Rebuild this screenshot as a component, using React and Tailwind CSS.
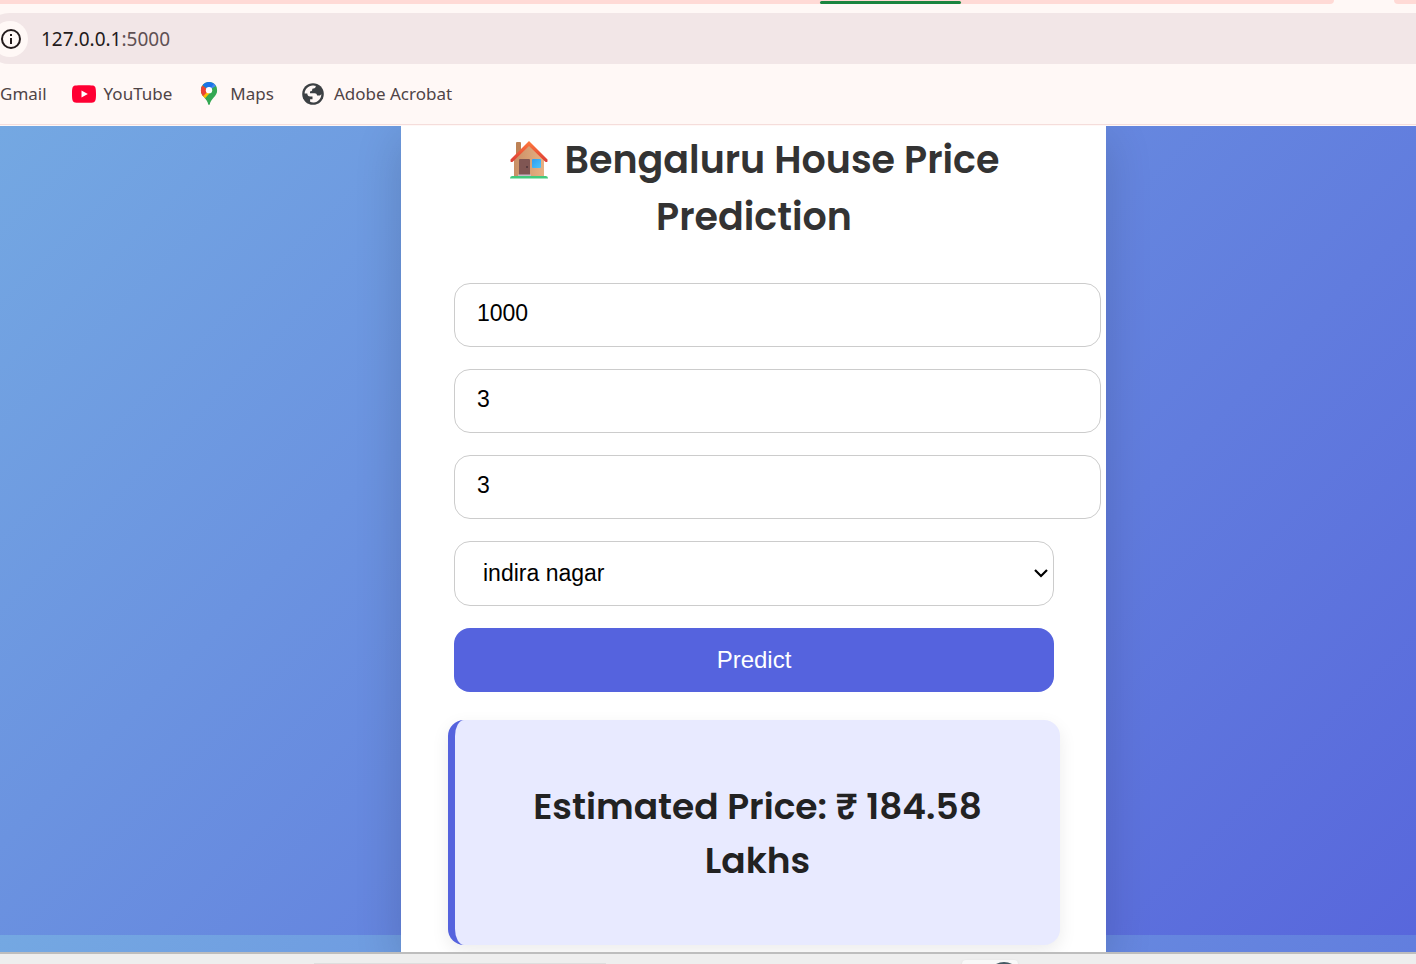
import { useState } from "react";

function InfoIcon() {
  return (
    <svg viewBox="0 0 22 22" className="size-[22px]" aria-hidden="true">
      <circle cx="11" cy="11" r="9" fill="none" stroke="#231a1b" strokeWidth="2" />
      <rect x="10" y="10" width="2" height="6" fill="#231a1b" />
      <rect x="10" y="6" width="2" height="2" fill="#231a1b" />
    </svg>
  );
}

function YouTubeIcon() {
  return (
    <svg viewBox="0 0 24 18" className="h-[18px] w-6" aria-hidden="true">
      <path d="M3 .6C6 .1 18 .1 21 .6 23.400 1 24 3 24 9s-.6 8-3 8.400c-3 .5-15 .5-18 0C.6 17 0 15 0 9S.6 1 3 .6z" fill="#ff0033" />
      <path d="M9.500 5.400v7.200l6.300-3.600z" fill="#fff" />
    </svg>
  );
}

function MapsIcon() {
  return (
    <svg viewBox="0 0 18 26" className="h-[25px] w-[18px]" aria-hidden="true">
      <defs>
        <clipPath id="pin">
          <path d="M9 1a8.500 8.500 0 0 0-8.500 8.500c0 3.300 1.600 5.300 3.600 7.700C6.300 19.800 7.500 21 8.100 24c.3 1.400 1.500 1.400 1.800 0 .6-3 1.800-4.200 4-6.800 2-2.400 3.600-4.400 3.600-7.700A8.500 8.500 0 0 0 9 1z" />
        </clipPath>
      </defs>
      <g clipPath="url(#pin)">
        <rect width="18" height="26" fill="#34a853" />
        <path d="M0 14 9 7l3.500 2.500-8.500 9.500L0 20z" fill="#fbbc04" />
        <path d="M0 3 9 9.500 2.500 16 0 14z" fill="#ea4335" />
        <path d="M2 4 6 0h7l2 2.500-6 7z" fill="#1a73e8" />
        <path d="M12 0l6 0v5l-1.500 0L9 9.500 14.500 2z" fill="#4285f4" />
      </g>
      <circle cx="9" cy="9.500" r="3.300" fill="#fff" />
    </svg>
  );
}

function GlobeIcon() {
  return (
    <svg viewBox="0 0 22 22" className="size-[22px]" aria-hidden="true">
      <circle cx="11" cy="11" r="10.800" fill="#3c4043" />
      <path d="M2.600 10.500c.2-4.300 3.800-7.700 8-7.900 1.500 0 2.500.2 3.200.5-.1 1.500-.9 2.300-2.300 2.300-.9 0-1.300.5-1.300 1.300 0 1.100-.8 1.700-2.200 1.700v1.800h4.600c1.500 0 2.300.8 2.500 2.200h2c.9 0 1.600-.5 2.200-1.500.2 4.400-3.200 8.200-7.400 8.500-1.500.1-2.800-.2-3.800-.7v-2.500h2.400v-2.700H8.300c-2 0-3-1.200-3-3z" fill="#fff8f6" />
    </svg>
  );
}

function HouseIcon() {
  return (
    <svg viewBox="0 0 40 40" className="mr-4 inline-block size-10 align-[-7px]" aria-hidden="true">
      <defs>
        <linearGradient id="wall" x1="0" x2="1">
          <stop offset="0" stopColor="#c88f66" />
          <stop offset="1" stopColor="#e8b183" />
        </linearGradient>
        <linearGradient id="roof" x1="0" x2="0" y1="0" y2="1">
          <stop offset="0" stopColor="#ff7b3d" />
          <stop offset="1" stopColor="#dc3b35" />
        </linearGradient>
        <linearGradient id="pane" x1="0" x2="1" y1="0" y2="1">
          <stop offset="0" stopColor="#2f9df0" />
          <stop offset="1" stopColor="#4cc4fb" />
        </linearGradient>
      </defs>
      <path d="M7 3q0-1 1-1h3q1 0 1 1v16H7z" fill="#bd8255" />
      <path d="M5 18 20 5l15 13v20H5z" fill="url(#wall)" />
      <path d="M20 1 1.500 19.500v2q1 1 2.500 0L20 6l16 15.500q1.500 1 2.500 0v-2z" fill="url(#roof)" />
      <rect x="10" y="19" width="11" height="17" rx="1" fill="#805653" />
      <circle cx="18" cy="27" r="1" fill="#4e3438" />
      <rect x="23" y="19" width="9" height="9" rx="1" fill="url(#pane)" />
      <path d="M9 34.500h13v2H9z" fill="#c9b8c6" />
      <path d="M3 36h34q2 0 2 2.500H1Q1 36 3 36z" fill="#43ca7c" />
    </svg>
  );
}

function BrowserChrome() {
  return (
    <header className="overflow-hidden bg-[#fff8f6] font-['Noto_Sans','Open_Sans',sans-serif]">
      <div className="flex h-1 justify-between">
        <div className="flex w-[1334px] items-end rounded-br-lg bg-[#ffdad6] pl-[820px]">
          <div className="h-[3px] w-[141px] rounded-sm bg-[#1a8540]" />
        </div>
        <div className="w-[22px] rounded-bl-lg bg-[#ffdad6]" />
      </div>
      <div className="mt-[9px] -ml-4 flex h-[51px] items-center rounded-l-full bg-[#f2e6e7] pl-2">
        <button type="button" aria-label="Site information" className="flex size-9 items-center justify-center rounded-full bg-[#fff8f6] pl-[2px]">
          <InfoIcon />
        </button>
        <div className="ml-[13px] text-[19px] leading-7 text-[#231a1b]">
          127.0.0.1<span className="text-[#5f5053]">:5000</span>
        </div>
      </div>
      <nav className="flex h-[61px] items-center border-b border-[#f5dddb] pb-px text-[17px] text-[#4f4446]">
        <a href="#gmail" className="mr-[25px]">Gmail</a>
        <a href="#youtube" className="mr-7 flex items-center gap-2"><YouTubeIcon />YouTube</a>
        <a href="#maps" className="mr-7 flex items-center gap-3"><MapsIcon />Maps</a>
        <a href="#acrobat" className="flex items-center gap-[10px]"><GlobeIcon />Adobe Acrobat</a>
      </nav>
    </header>
  );
}

function NumberField({ label, value, onChange }) {
  return (
    <input
      type="text"
      inputMode="numeric"
      aria-label={label}
      value={value}
      onChange={(e) => onChange(e.target.value)}
      className="block h-16 w-[calc(100%+47px)] rounded-2xl border border-[#ccc] bg-white px-[22px] pb-1 text-black"
    />
  );
}

function PredictionCard() {
  const [area, setArea] = useState("1000");
  const [bedrooms, setBedrooms] = useState("3");
  const [bathrooms, setBathrooms] = useState("3");
  return (
    <section className="w-full max-w-[705px] bg-white pt-[5px] pr-[52px] pb-[6px] pl-[53px] text-center shadow-[0_12px_44px_rgba(0,0,0,0.16)]">
      <h1 className="font-['Poppins','Inter',sans-serif] text-[38px] leading-[57px] font-semibold text-[#333]">
        <HouseIcon />Bengaluru House Price Prediction
      </h1>
      <form onSubmit={(e) => e.preventDefault()} className="mt-[38px] flex flex-col gap-[22px] text-left font-['Liberation_Sans',Arial,sans-serif] text-[23px]">
        <NumberField label="Total square feet" value={area} onChange={setArea} />
        <NumberField label="Bedrooms" value={bedrooms} onChange={setBedrooms} />
        <NumberField label="Bathrooms" value={bathrooms} onChange={setBathrooms} />
        <div className="grid items-center">
          <select aria-label="Location" defaultValue="indira nagar" className="col-start-1 row-start-1 h-[65px] w-full appearance-none rounded-2xl border border-[#ccc] bg-white px-7 text-black">
            <option>indira nagar</option>
          </select>
          <svg viewBox="0 0 14 9" className="pointer-events-none col-start-1 row-start-1 mr-[6px] h-[9px] w-[14px] justify-self-end" aria-hidden="true">
            <path d="m1 1 6 6 6-6" fill="none" stroke="#000" strokeWidth="2.200" />
          </svg>
        </div>
        <button type="submit" className="h-16 rounded-2xl bg-[#5563de] text-[24px] text-white">Predict</button>
      </form>
      <div className="-mx-[6px] mt-7 rounded-2xl border-l-[7px] border-[#5563de] bg-[#e8eaff] px-10 pt-[60px] pb-[57px] shadow-[0_6px_18px_rgba(0,0,0,0.08)]">
        <h2 className="font-['Poppins','Inter',sans-serif] text-[36px] leading-[54px] font-semibold text-[#222]">
          Estimated Price: ₹ 184.58 Lakhs
        </h2>
      </div>
    </section>
  );
}

function Taskbar() {
  return (
    <footer className="flex h-3 items-end overflow-hidden border-t-2 border-[#bdbdbd] bg-[#eee]">
      <div className="ml-[314px] h-px w-[292px] bg-[#dedede]" />
      <div className="ml-[356px] flex h-1 w-[56px] items-end justify-end rounded-t bg-[#f8f8f8] pr-[6px] shadow">
        <svg viewBox="0 0 16 2" className="h-[2px] w-4" aria-hidden="true">
          <path d="M0 2Q8-2 16 2z" fill="#455a64" />
        </svg>
      </div>
    </footer>
  );
}

export default function App() {
  return (
    <div className="flex min-h-screen flex-col bg-[#fff8f6]">
      <BrowserChrome />
      <main className="mt-px flex flex-1 justify-center overflow-hidden bg-[linear-gradient(135deg,#74a8e2,#5867dc)] bg-[length:100%_809px] pl-[91px]">
        <PredictionCard />
      </main>
      <Taskbar />
    </div>
  );
}
